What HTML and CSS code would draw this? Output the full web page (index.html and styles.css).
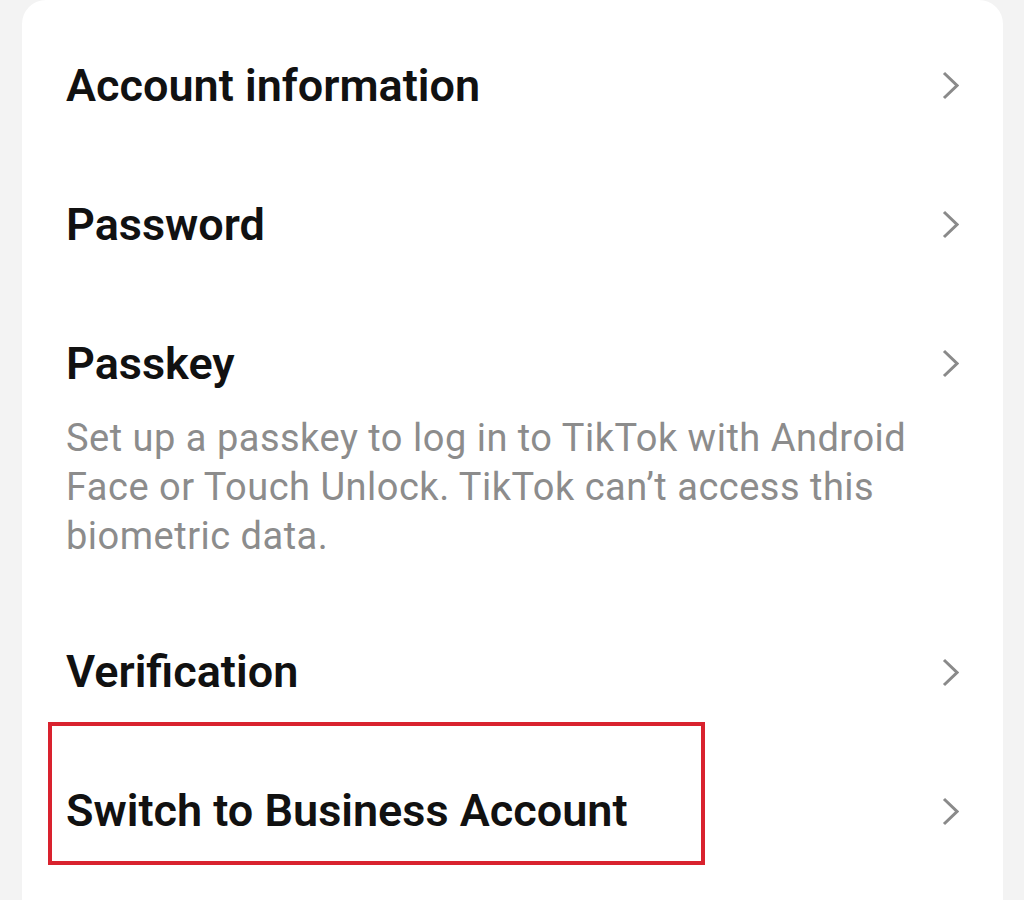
FILE: index.html
```html
<!DOCTYPE html>
<html lang="en">
<head>
    <meta charset="UTF-8">
    <meta name="viewport" content="width=device-width, initial-scale=1.0">
    <title>Account settings</title>
    <link rel="stylesheet" href="styles.css">
</head>
<body>
    <div class="card">
        <div class="row">
            <span class="title">Account information</span>
            <svg class="chevron" viewBox="0 0 17 29"><path d="M2 2 L15 14.5 L2 27"/></svg>
        </div>
        <div class="row">
            <span class="title">Password</span>
            <svg class="chevron" viewBox="0 0 17 29"><path d="M2 2 L15 14.5 L2 27"/></svg>
        </div>
        <div class="row row-desc">
            <div class="row-head">
                <span class="title">Passkey</span>
                <svg class="chevron" viewBox="0 0 17 29"><path d="M2 2 L15 14.5 L2 27"/></svg>
            </div>
            <p class="desc">Set up a passkey to log in to TikTok with Android Face or Touch Unlock. TikTok can’t access this biometric data.</p>
        </div>
        <div class="row">
            <span class="title">Verification</span>
            <svg class="chevron" viewBox="0 0 17 29"><path d="M2 2 L15 14.5 L2 27"/></svg>
        </div>
        <div class="row">
            <span class="title">Switch to Business Account</span>
            <svg class="chevron" viewBox="0 0 17 29"><path d="M2 2 L15 14.5 L2 27"/></svg>
            <div class="highlight"></div>
        </div>
    </div>
</body>
</html>
```
FILE: styles.css
```css
body {
    margin: 0;
    background-color: #f3f3f3;
    font-family: Roboto, "Liberation Sans", sans-serif;
}
.card {
    margin: 0 21px 0 22px;
    padding-top: 16px;
    min-height: 900px;
    box-sizing: border-box;
    background-color: #fff;
    border-radius: 24px 24px 0 0;
}
.row {
    position: relative;
    display: flex;
    align-items: center;
    justify-content: space-between;
    padding: 41.5px 44px;
    height: 56px;
}
.row-desc {
    display: block;
    height: auto;
    padding-bottom: 42px;
}
.row-head {
    display: flex;
    align-items: center;
    justify-content: space-between;
    height: 56px;
}
.title {
    font-size: 45px;
    font-weight: 600;
    color: #111;
    line-height: 56px;
}
.desc {
    margin: 22px 0 0 0;
    font-size: 38px;
    line-height: 49px;
    color: #8c8c8c;
    letter-spacing: 0.5px;
}
.chevron {
    width: 17px;
    height: 29px;
    fill: none;
    stroke: #8a8a8a;
    stroke-width: 3;
}
.highlight {
    position: absolute;
    left: 26px;
    top: -19.5px;
    width: 649px;
    height: 135px;
    border: 4px solid #d9222e;
}
```
